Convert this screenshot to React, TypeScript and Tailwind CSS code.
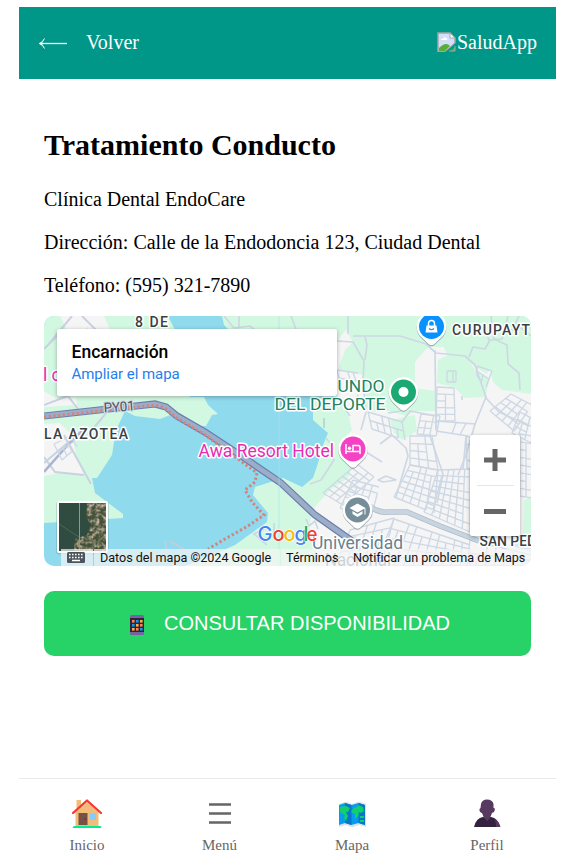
import React from 'react';

type Pt = [number, number];

const mix = (a: Pt, b: Pt, t: number): Pt => [a[0] + (b[0] - a[0]) * t, a[1] + (b[1] - a[1]) * t];

// Streets of one neighbourhood: a quadrilateral divided into blocks.
function streets(a: Pt, b: Pt, c: Pt, d: Pt, cols: number, rows: number): string {
  let path = '';
  const line = (p: Pt, q: Pt) => {
    path += `M${p[0].toFixed(1)} ${p[1].toFixed(1)}L${q[0].toFixed(1)} ${q[1].toFixed(1)}`;
  };
  for (let i = 0; i <= cols; i++) {
    const shift = i % 3 === 1 ? 1 / rows : 0;
    const top = mix(a, b, i / cols);
    const bottom = mix(d, c, i / cols);
    line(mix(top, bottom, shift), bottom);
  }
  for (let j = 0; j <= rows; j++) {
    const shift = j % 4 === 2 ? 1 / cols : 0;
    const left = mix(a, d, j / rows);
    const right = mix(b, c, j / rows);
    line(left, mix(left, right, 1 - shift));
  }
  return path;
}

const neighbourhoods = [
  streets([437, 387], [454, 388], [455, 421], [436, 421], 2, 5),
  streets([436, 421], [476, 424], [468, 436], [436, 431], 4, 1),
  streets([421, 414], [440, 416], [436, 436], [417, 434], 3, 3),
  streets([511, 394], [532, 405], [514, 431], [490, 411], 4, 4),
  streets([520, 412], [535, 420], [531, 443], [512, 433], 3, 3),
  streets([477, 366], [492, 371], [486, 387], [477, 376], 2, 2),
  streets([447, 371], [456, 371], [456, 382], [447, 382], 3, 1),
  streets([410, 465], [438, 470], [434, 513], [394, 497], 5, 6),
  streets([438, 470], [470, 469], [470, 532], [424, 512], 6, 8),
  streets([410, 436], [432, 436], [438, 470], [410, 465], 3, 4),
  streets([466, 436], [473, 438], [473, 470], [467, 468], 1, 4),
  streets([394, 519], [470, 545], [470, 566], [375, 566], 10, 5),
  streets([350, 530], [394, 518], [381, 566], [336, 566], 5, 5),
  streets([357, 464], [374, 477], [343, 505], [323, 493], 3, 7),
  streets([353, 480], [379, 487], [371, 518], [340, 508], 4, 5),
  streets([368, 412], [402, 422], [405, 440], [372, 429], 5, 2),
  streets([520, 434], [532, 436], [532, 498], [520, 496], 2, 8),
  streets([337, 370], [358, 373], [362, 382], [339, 378], 4, 1),
  streets([54, 444], [71, 436], [77, 447], [62, 460], 3, 2),
  streets([470, 540], [531, 555], [531, 566], [467, 566], 7, 2),
];

function Pin({ x, y, color, children }: { x: number; y: number; color: string; children: React.ReactNode }) {
  return (
    <g transform={`translate(${x} ${y})`}>
      <path d="M-10.6 10.3 A14.8 14.8 0 1 1 10.6 10.3 L3 17.5 Q0 20.2 -3 17.5Z" fill="#4a555e" opacity=".5" transform="translate(0 1)" />
      <path d="M-10.6 10.3 A14.8 14.8 0 1 1 10.6 10.3 L3 17.5 Q0 20.2 -3 17.5Z" fill="#fff" />
      <circle r="12.5" fill={color} />
      {children}
    </g>
  );
}

function MapDrawing() {
  return (
    <svg className="block h-full w-full" viewBox="44 316 487 250" fontFamily="Roboto, sans-serif">
      <defs>
        <filter id="terrain" x="0" y="0" width="1" height="1">
          <feTurbulence type="fractalNoise" baseFrequency=".25" numOctaves="3" seed="8" />
          <feColorMatrix values="0 0 0 0 .6  0 0 0 0 .5  0 0 0 0 .37  2.4 0 0 0 -.95" />
          <feComposite in2="SourceGraphic" operator="in" />
        </filter>
      </defs>
      <rect x="44" y="316" width="487" height="250" fill="#90daee" />

      {/* Western shore */}
      <path d="M44 316H168L175 330 190 397H204L208 405 218 414 212 415 206 426 194 426 175 413 160 419 135 416 125 411 118 426 115 436 112 455 97 478 92 478 95 493 123 514V518L44 523Z" fill="#d3f8e2" />
      <path d="M60 316H96L85 330H67ZM44 391L50 395 58 399 76 397 77 405 44 407ZM44 424L60 423 72 435 76 455 84 475 60 473 44 476ZM87 316H104L110 330H88Z" fill="#f5f5f5" />
      <path d="M82 316L100 334M72 316L48 345M44 349L60 333M44 405L78 392 M68 396L78 409M107 412L92 430M64 435L91 484M44 463L84 429M44 457L55 472L84 475" fill="none" stroke="#c9d2e1" strokeWidth="2" />
      <path d="M44 472L66 447L84 429" fill="none" stroke="#a9b6cf" strokeWidth="2.5" />

      {/* Eastern shore */}
      <path d="M222 316L224 325 229 330V335H337V397L313 398V420L328 433 323 445 319 460 313 478 302 487 283 478 255 487 253 495 268 513 267 522 235 545 210 556 185 566H531V316Z" fill="#d3f8e2" />
      <path d="M337 341L346 330 353 342 345 350 338 370 364 375 365 412 388 411 407 416 415 411 436 411 435 391 415 388 415 362 428 347 444 347 447 355 465 356 475 367 487 374 490 368 493 382 502 390 531 394V566H320L309 526 314 508 330 490 348 478 357 455 342 440 352 430 348 413 337 395Z" fill="#f5f5f5" />
      <path d="M438 360Q449 352 467 356L475 370 490 379 485 397 465 398 455 388 437 383ZM390 420L415 415 417 431 402 440 394 433ZM398 435H414L405 438ZM524 500L531 497V541L523 537Z" fill="#d3f8e2" />
      <path d="M531 533H520L513 546 531 552Z" fill="#d8e8f0" />
      <path d="M324 418V428" stroke="#b7d9d3" strokeWidth="2" />

      <g fill="none" stroke="#ced8e5" strokeWidth="1.7" strokeLinejoin="round">
        {neighbourhoods.map((d) => (
          <path key={d} d={d} strokeWidth="1.35" />
        ))}
        <path d="M224 316L234 328 250 326 256 331M239 316V328M291 316L296 329M348 316V334M353 336H400L426 344 436 353 465 356 475 365 480 380 486 397 475 424 466 455 458 475" />
        <path d="M337 341L353 342 364 361 363 382 366 412 361 430M358 395L351 406M365 337L367 345 365 360M342 404L350 416" />
        <path d="M435 350L436 429M469 357L473 347 485 349 490 340 502 339 508 316M491 316L494 339 507 345 508 364 519 373 520 390M489 340L483 324M502 332L521 328 531 336M519 316L514 327" />
        <path d="M436 416L410 411 402 422M388 413L401 411M462 396V400M485 397L499 412 529 426M380 444L392 435 406 448 408 456 396 497 M430 436L443 474 437 503M463 469L466 437M363 450L382 462M378 480L386 476 396 480 383 482Z" />
        <path d="M322 452L330 449 334 460 321 480 310 484M326 438L333 447M268 527L254 534 267 545M274 523V535M306 519L309 526 315 521 318 529" />
        <path d="M165 541L167 551M170 541L185 550 198 561" stroke="#c7cbd8" />
      </g>

      <path d="M372 508Q381 513 388 512H407L440 526 479 541" fill="none" stroke="#aebdca" strokeWidth="5.5" />
      <path d="M372 508Q381 513 388 512H407L440 526 479 541" fill="none" stroke="#c8d4df" strokeWidth="4" />

      <path d="M44 416L99 410 155 404 166 407 177 416 205 432 240 455 281 483 315 515 352 541" fill="none" stroke="#6b7eaa" strokeWidth="7.2" />
      <path d="M44 416L99 410 155 404 166 407 177 416 205 432 240 455 281 483 315 515 352 541" fill="none" stroke="#9cadc9" strokeWidth="4.8" />
      <path d="M44 417L99 411 155 405 165 408 175 417 205 435 238 459 257 473 255 482 245 490 252 502 264 515 248 526 225 539 208 549" fill="none" stroke="#d2847f" strokeWidth="3" strokeDasharray="2.3 2.4" />
      <path d="M279 316V566" stroke="#a5e2ef" strokeWidth=".6" />

      {/* Place names */}
      <g stroke="#fff" strokeWidth="3" paintOrder="stroke" strokeLinejoin="round">
        <g fill="#3c4043" fontSize="14" fontWeight="500">
          <text x="135" y="326.5" textLength="33">8 DE</text>
          <text x="44" y="438.5" textLength="84">LA AZOTEA</text>
          <text x="452" y="334.5" textLength="88">CURUPAYTY</text>
          <text x="479.500" y="545.5" textLength="75">SAN PEDRO</text>
        </g>
        <text x="104" y="412.500" fill="#4b5363" fontSize="13.5" textLength="31" stroke="#d5dce7" strokeWidth="2.5" transform="rotate(-4 104 412)">PY01</text>
        <g fill="#208461" fontSize="17">
          <text x="337.500" y="392" textLength="47" lengthAdjust="spacingAndGlyphs">UNDO</text>
          <text x="274.500" y="409.5" textLength="111" lengthAdjust="spacingAndGlyphs">DEL DEPORTE</text>
        </g>
        <g fill="#e92bb2" fontSize="17.500">
          <text x="198.5" y="457" textLength="135.5" lengthAdjust="spacingAndGlyphs">Awa Resort Hotel</text>
          <text x="43" y="381">l c</text>
        </g>
        <g fill="#69818e" fontSize="17.500">
          <text x="312" y="548.500" textLength="91" lengthAdjust="spacingAndGlyphs">Universidad</text>
          <text x="325" y="566" textLength="66" lengthAdjust="spacingAndGlyphs">Nacional</text>
        </g>
      </g>

      <Pin x={431.500} y={326.500} color="#0792ff">
        <path d="M-5-1H5L6 6H-6Z" fill="#fff" />
        <path d="M-3 0V-3A3 3 0 0 1 3-3V0" fill="none" stroke="#fff" strokeWidth="1.5" />
        <path d="M-2.500 2Q0 4.500 2.500 2" fill="none" stroke="#0792ff" strokeWidth="1.100" />
      </Pin>
      <Pin x={403.500} y={392} color="#1ba873">
        <circle r="5" fill="#fff" />
      </Pin>
      <Pin x={353} y={449} color="#f542c5">
        <path d="M-7-5V5M-7 2.500H7M7 5V-1.500Q7-3.500 5-3.500H0V2" stroke="#fff" strokeWidth="1.500" fill="none" />
        <circle cx="-3.500" cy="-.8" r="1.800" fill="#fff" />
      </Pin>
      <Pin x={357.500} y={510} color="#758e9a">
        <path d="M-8-2L0-6.500 8-2 0 2.500ZM-5 1L0 4 5 1V4L0 7-5 4ZM7-1.500H8V4.500H7Z" fill="#fff" />
      </Pin>

      <g fontSize="20" stroke="#fff" strokeWidth="1.200" paintOrder="stroke" fontFamily="Inter, sans-serif" fontWeight="500">
        <text y="540.500" fill="#4285f4" x="257.5">G</text>
        <text y="540.500" fill="#ea4335" x="272.5">o</text>
        <text y="540.500" fill="#fbbc04" x="283.500">o</text>
        <text y="540.500" fill="#4285f4" x="294.5">g</text>
        <text y="540.500" fill="#34a853" x="303.500">l</text>
        <text y="540.500" fill="#ea4335" x="306.5" textLength="11" lengthAdjust="spacingAndGlyphs">e</text>
      </g>

      {/* Satellite view toggle */}
      <rect x="56" y="501.500" width="53" height="53" rx="3" fill="#536a70" opacity=".22" />
      <rect x="57" y="501" width="51" height="52" rx="2" fill="#fff" />
      <rect x="59" y="503" width="47" height="48" fill="#304b3f" />
      <path d="M87 503H106V551H74L75 539 87 535 91 525 86 517Z" fill="#46513a" />
      <path d="M87 503H106V551H74L75 539 87 535 91 525 86 517Z" fill="#46563c" filter="url(#terrain)" />
      <path d="M79.500 503V551" stroke="#8b9b93" />
      <path d="M59 524L79 537" stroke="#50665a" />
    </svg>
  );
}

function KeyboardIcon() {
  return (
    <svg className="h-[11px] w-[18px]" viewBox="0 0 18 11">
      <rect width="18" height="11" rx="1.500" fill="#4b555b" />
      <path d="M2 2.500H16M2 5.500H16" stroke="#fff" strokeWidth="1.500" strokeDasharray="1.600 1.400" />
      <path d="M5 8.500H13" stroke="#fff" strokeWidth="1.300" />
    </svg>
  );
}

function MapPanel() {
  return (
    <div className="relative h-[250px] overflow-hidden rounded-[10px] font-[Roboto,sans-serif]">
      <MapDrawing />
      <div className="absolute left-[13px] top-[13px] h-[67px] w-[280px] rounded-[2px] bg-white pl-[14.5px] pt-[13px] shadow-[0_1px_4px_rgba(0,0,0,0.3)]">
        <div className="text-[17.5px] font-medium leading-[20px] text-black">Encarnación</div>
        <div className="mt-[3px] text-[15px] leading-[18px] tracking-[-0.04px] text-[#267eec]">Ampliar el mapa</div>
      </div>
      <div className="absolute left-[426px] top-[119px] flex h-[101px] w-[50px] flex-col items-center rounded-[2px] bg-white shadow-[0_1px_4px_rgba(0,0,0,0.3)]">
        <svg className="h-[50px] w-[50px]" viewBox="0 0 50 50"><path d="M14 25H36M25 14V36" stroke="#666" strokeWidth="5" /></svg>
        <div className="h-px w-[37px] bg-[#e6e6e6]" />
        <svg className="h-[50px] w-[50px]" viewBox="0 0 50 50"><path d="M14 25.500H36" stroke="#666" strokeWidth="5" /></svg>
      </div>
      <div className="absolute bottom-0 left-[17px] right-0 flex h-[17px] items-center text-[12.6px] leading-[17px] tracking-[-0.03px] text-[#111]">
        <div className="flex h-full w-[32px] items-center bg-[#f5f5f5]/70 pl-[6px]"><KeyboardIcon /></div>
        <div className="ml-px h-full w-[186px] whitespace-nowrap bg-[#f5f5f5]/70 pl-[6px]">Datos del mapa ©2024 Google</div>
        <div className="ml-px h-full w-[67px] bg-[#f5f5f5]/70 pl-[5px]">Términos</div>
        <div className="h-full flex-1 whitespace-nowrap bg-[#f5f5f5]/70 pl-[5px]">Notificar un problema de Maps</div>
      </div>
    </div>
  );
}

function BrokenImageIcon() {
  return (
    <svg className="h-5 w-5" viewBox="0 0 20 20">
      <path d="M1 1H13L18 6V11L9 19.500H1Z" fill="#d3dff8" stroke="#a5a6a5" strokeWidth="1.500" />
      <path d="M13 1V6H18Z" fill="#fff" stroke="#a5a6a5" />
      <path d="M4 8Q4 6 6 7Q7 4 9 6Q11 6 10 8Z" fill="#fff" />
      <path d="M2 19V16Q9 9 13 14L8 19ZM18 14V19H12Z" fill="#58ae38" />
      <path d="M19 11V14L12 20H8Z" fill="#009688" />
      <path d="M18 14V19H12" fill="none" stroke="#a5a6a5" />
    </svg>
  );
}

function HouseIcon() {
  return (
    <svg className="h-[30px] w-[30px]" viewBox="0 0 30 30">
      <path d="M4.500 2H9V10H4.500ZM3.500 14L15 4 26.500 14V28H3.500Z" fill="#f2bd7b" />
      <path d="M1 15L15 2.500 29 15" fill="none" stroke="#f73533" strokeWidth="2.300" strokeLinecap="round" strokeLinejoin="round" />
      <rect x="6.500" y="15" width="9" height="12" fill="#795043" />
      <circle cx="13.500" cy="21" r=".8" fill="#443440" />
      <rect x="17.500" y="15" width="6.500" height="7" fill="#83ceff" />
      <path d="M.5 30Q.5 28 3 28H28Q29.500 28 29.500 30Z" fill="#00ed91" />
    </svg>
  );
}

function WorldMapIcon() {
  return (
    <svg className="h-[30px] w-[30px]" viewBox="0 0 30 30">
      <path d="M2 6L9 3.500 15 6 22 3.500 29 6V29L22 27 15 29.500 9 27 2 29Z" fill="#dfe0e2" />
      <path d="M2 7L8 5 14.500 7 21.500 5 28 7V27L21.500 25 14.500 27 8 25 2 27Z" fill="#079ced" />
      <path d="M8 5L14.500 7V27L8 25ZM21.500 5L28 7V27L21.500 25Z" fill="#0876c9" />
      <path d="M3 9L9 8 13 10 11 14H9L11 18 9 23 7 20 8 17 4 15 3 13ZM14 14L17 10 20 9 21 7 26 9 27 13 24 15 22 14 21 18 18 21 18 16ZM23 18H27V20H23ZM23 22H27V24H23Z" fill="#12cf67" />
    </svg>
  );
}

function PersonIcon() {
  return (
    <svg className="h-[30px] w-[30px]" viewBox="0 0 30 30">
      <path d="M2 29Q4 20 11 19H19Q26 20 28 29Z" fill="#34213f" />
      <path d="M24 29Q24 24 22.500 21Q27 23 28.500 29Z" fill="#583960" />
      <path d="M9 6Q10 1.500 15 1.500Q20.500 1.500 21.500 6V10Q24 10 22 14L20 15 18 20 15.500 23 12 20 10 15Q7 14 7.500 11L8.500 10Z" fill="#583960" />
    </svg>
  );
}

function PhoneIcon() {
  return (
    <svg className="h-5 w-[14px]" viewBox="0 0 14 20">
      <rect width="14" height="20" rx="1.500" fill="#7664a2" />
      <rect y="3" width="14" height="14" fill="#30213e" />
      {[5, 9, 13].map((y, row) => [2, 6, 10].map((x, col) => (
        <rect key={`${x}-${y}`} x={x} y={y} width="2.600" height="2.600" fill={['#ff8051', '#079cee', '#fbb13a'][(row + col) % 3]} />
      )))}
    </svg>
  );
}

const navItems = [
  { label: 'Inicio', icon: <HouseIcon /> },
  { label: 'Menú', icon: <svg className="h-[30px] w-[30px]" viewBox="0 0 30 30"><path d="M4 6.500H26M4 15.500H26M4 24.500H26" stroke="#666" strokeWidth="2.400" /></svg> },
  { label: 'Mapa', icon: <WorldMapIcon /> },
  { label: 'Perfil', icon: <PersonIcon /> },
];

export default function App() {
  return (
    <div className="flex h-[863px] flex-col bg-white pl-[19px] pr-3 pt-[7px] font-['Liberation_Serif',serif] text-black">
      <header className="flex h-[72px] shrink-0 items-center justify-between bg-[#009688] pb-0.5 pl-[19px] pr-[19px] text-[20px] leading-none text-white">
        <div className="flex items-center gap-[18px]">
          <svg className="mt-0.5 h-[14px] w-[30px]" viewBox="0 0 30 14"><path d="M2 7.500H29" stroke="#fff" strokeWidth="1.300" /><path d="M6.500 2.500Q5 6 1 7.500Q5 9 6.500 12.500L3.500 7.500Z" fill="#fff" stroke="#fff" strokeWidth=".6" /></svg>
          <span>Volver</span>
        </div>
        <div className="flex items-center"><BrokenImageIcon /><span>SaludApp</span></div>
      </header>
      <main className="flex flex-col px-[25px] pt-[48px]">
        <h2 className="text-[30px] font-bold leading-[35px]">Tratamiento Conducto</h2>
        <div className="mt-[26px] flex flex-col gap-[20px] text-[20px] leading-[23px]">
          <p>Clínica Dental EndoCare</p>
          <p>Dirección: Calle de la Endodoncia 123, Ciudad Dental</p>
          <p>Teléfono: (595) 321-7890</p>
        </div>
        <div className="mt-[19px]"><MapPanel /></div>
        <button className="mt-[25px] flex h-[65px] items-center justify-center gap-[20px] rounded-[10px] bg-[#27d367] pb-0.5 pl-[5px] font-['Liberation_Sans',sans-serif] text-[20px] text-white">
          <span className="pt-1"><PhoneIcon /></span>
          <span>CONSULTAR DISPONIBILIDAD</span>
        </button>
      </main>
      <nav className="mt-auto flex h-[85px] shrink-0 gap-[97.5px] border-t border-[#eaeaea] pl-[50.5px] pt-[19px] text-[15px] leading-[17px] text-[#666]">
        {navItems.map(({ label, icon }) => (
          <div key={label} className="flex w-[35px] flex-col items-center gap-[9px] last:ml-[2.5px]">{icon}<span>{label}</span></div>
        ))}
      </nav>
    </div>
  );
}
